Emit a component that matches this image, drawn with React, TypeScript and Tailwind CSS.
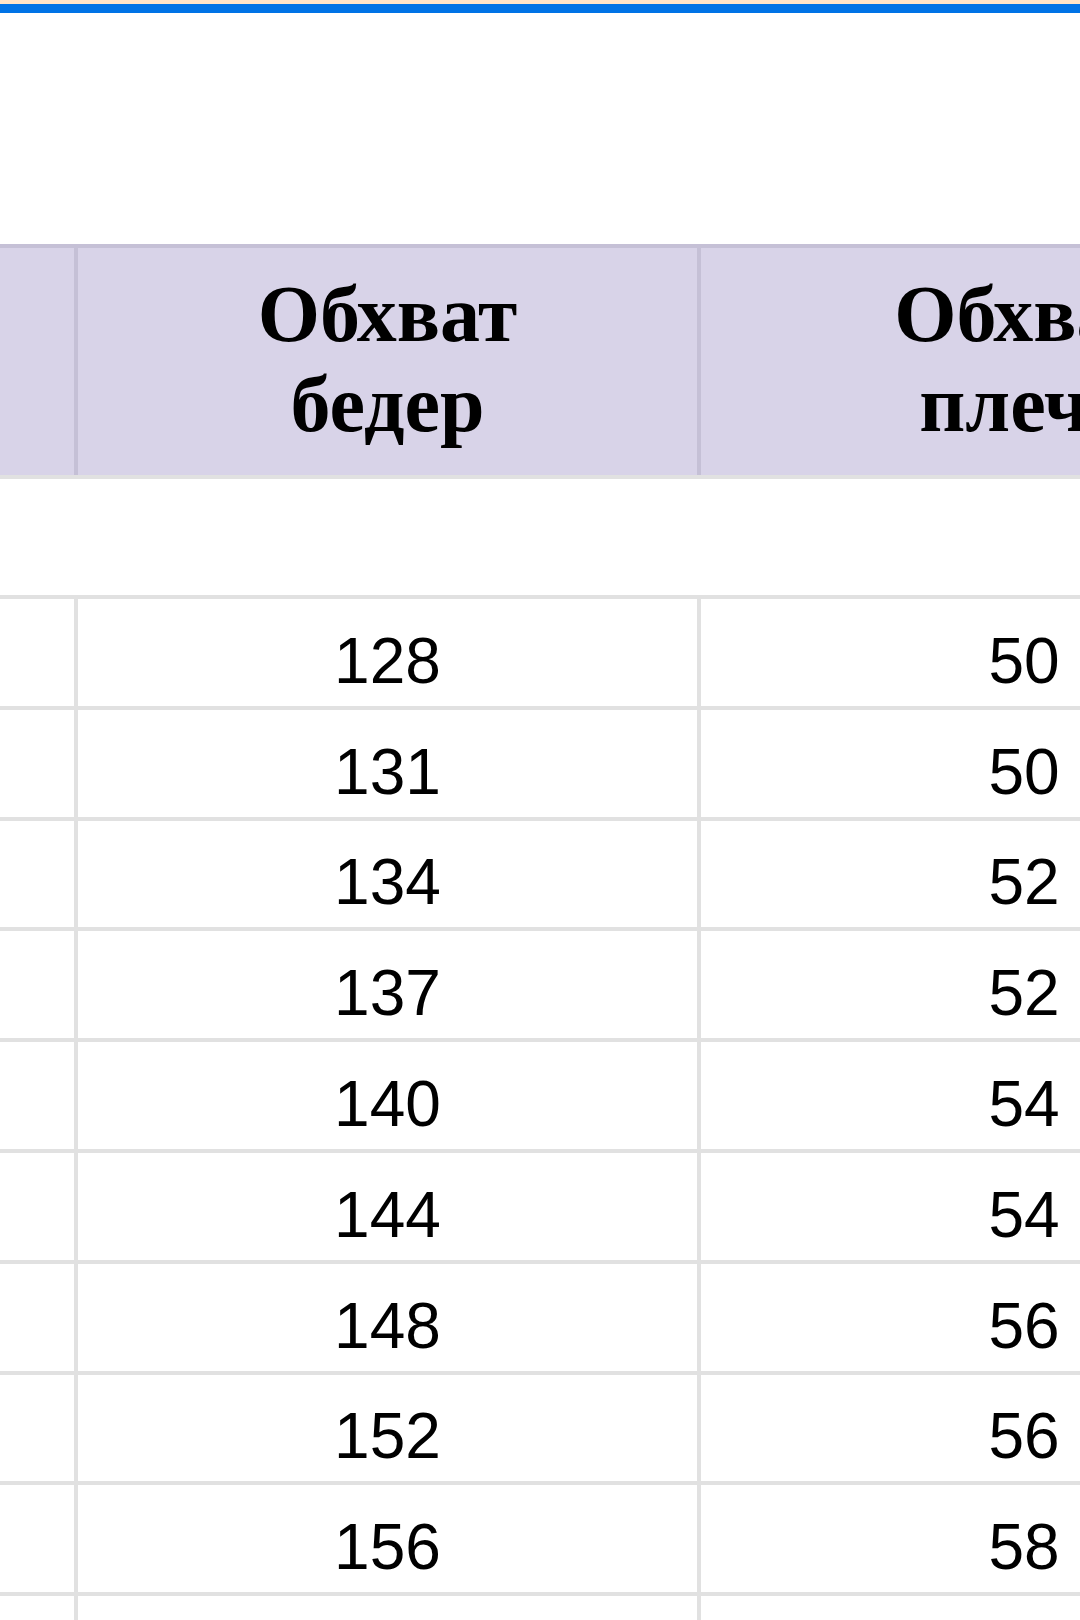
import React from "react";

// ── Data ──────────────────────────────────────────────────────────────────────

const ROWS = [
  { hips: 128, shoulder: 50 },
  { hips: 131, shoulder: 50 },
  { hips: 134, shoulder: 52 },
  { hips: 137, shoulder: 52 },
  { hips: 140, shoulder: 54 },
  { hips: 144, shoulder: 54 },
  { hips: 148, shoulder: 56 },
  { hips: 152, shoulder: 56 },
  { hips: 156, shoulder: 58 },
  { hips: null, shoulder: null },
];

const serif = "font-['Liberation_Serif','Times_New_Roman',serif]";
const sans = "font-['Liberation_Sans',Arial,sans-serif]";

// ── Header cell ───────────────────────────────────────────────────────────────

function HeadCell({ lines, className }: { lines: string[]; className: string }) {
  return (
    <div className={`flex flex-col items-center pt-[21px] ${className}`}>
      {lines.map((l) => (
        <span key={l} className={`${serif} text-[80px] leading-[90px] font-bold text-black whitespace-nowrap`}>
          {l}
        </span>
      ))}
    </div>
  );
}

// ── Main component ────────────────────────────────────────────────────────────

export default function App() {
  return (
    <div className="w-[1080px] h-[1620px] overflow-hidden bg-white">
      {/* top strip */}
      <div className="h-[4px] bg-[#ffe4c8]" />
      <div className="h-[9px] bg-[#0073e6]" />
      <div className="h-[231px]" />

      <div className="w-[1347px]">
        {/* header */}
        <div className="flex h-[235px] border-t-4 border-b-4 border-t-[#c5c0d6] border-b-[#e1e1e1] bg-[#d8d3e8]">
          <div className="w-[78px] border-r-4 border-[#c5c0d6]" />
          <HeadCell lines={["Обхват", "бедер"]} className="w-[623px] border-r-4 border-[#c5c0d6]" />
          <HeadCell lines={["Обхват", "плеча"]} className="w-[646px]" />
        </div>

        {/* blank row */}
        <div className="h-[116px]" />

        {/* data rows */}
        {ROWS.map((r, i) => (
          <div key={i} className="flex h-[110.8px] border-t-4 border-[#e1e1e1]">
            <div className="w-[78px] border-r-4 border-[#e1e1e1]" />
            <div
              className={`w-[623px] border-r-4 border-[#e1e1e1] flex items-end justify-center pb-[13px] ${sans} text-[64px] leading-none text-black`}
            >
              {r.hips}
            </div>
            <div
              className={`w-[646px] flex items-end justify-center pb-[13px] ${sans} text-[64px] leading-none text-black`}
            >
              {r.shoulder}
            </div>
          </div>
        ))}
      </div>
    </div>
  );
}
